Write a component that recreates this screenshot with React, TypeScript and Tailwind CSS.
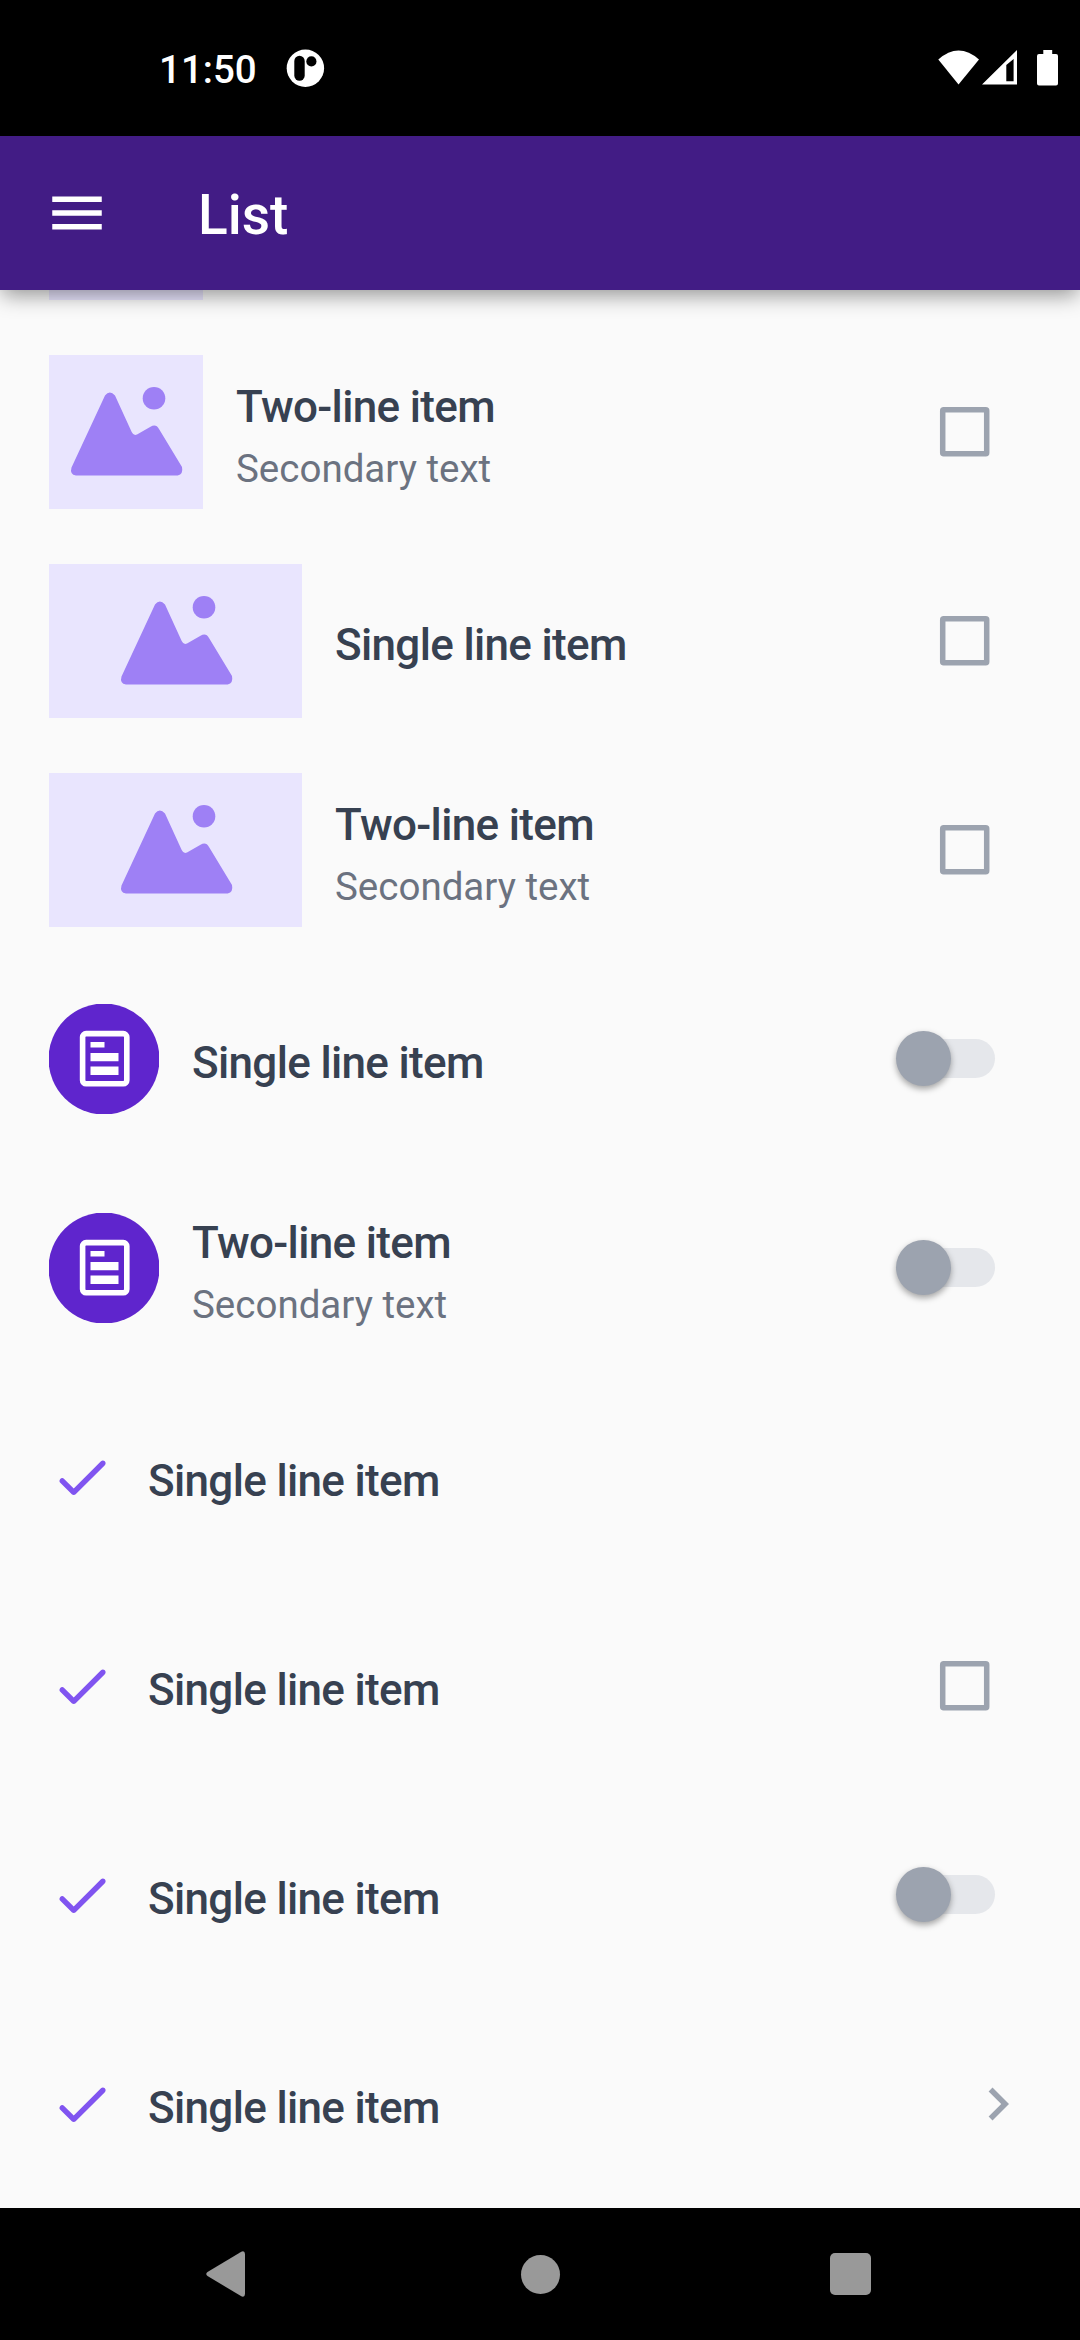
import { MdChevronRight, MdMenu } from "react-icons/md";

type Leading = "square" | "wide" | "avatar" | "check";
type Trailing = "checkbox" | "switch" | "chevron" | "none";

interface Item {
  leading: Leading;
  trailing: Trailing;
  twoLine?: boolean;
}

const items: Item[] = [
  { leading: "square", trailing: "checkbox", twoLine: true },
  { leading: "wide", trailing: "checkbox" },
  { leading: "wide", trailing: "checkbox", twoLine: true },
  { leading: "avatar", trailing: "switch" },
  { leading: "avatar", trailing: "switch", twoLine: true },
  { leading: "check", trailing: "none" },
  { leading: "check", trailing: "checkbox" },
  { leading: "check", trailing: "switch" },
  { leading: "check", trailing: "chevron" },
];

function Mountains() {
  return (
    <svg width="154" height="154" viewBox="0 0 154 154" fill="#9e80f5">
      <circle cx="105" cy="43.3" r="11.3" />
      <path d="M56 40.5Q60.7 34.5 66 40.5L82.7 77Q84.5 81 88 79.5L101.5 71.8Q107 68.5 110 74L133 112Q134.5 119 128.7 120.5H27Q20.5 119.5 22.5 112.5Z" />
    </svg>
  );
}

function Avatar() {
  return (
    <div className="h-[110px] w-[110px] shrink-0 overflow-hidden">
      <svg width="110" height="110" viewBox="0 0 110 110">
        <circle cx="55" cy="55" r="55.5" fill="#5f25cd" />
        <rect x="33.6" y="29.6" width="44.2" height="50.2" rx="3.5" fill="none" stroke="#fff" strokeWidth="5.6" />
        <path fill="#fff" d="M41.5 38h14v5.5h-14zM41.5 49h28v8.3h-28zM41.5 62.6h28v8.4h-28z" />
      </svg>
    </div>
  );
}

function LeadingView({ kind }: { kind: Leading }) {
  if (kind === "avatar") return <Avatar />;
  if (kind === "check")
    return (
      <svg className="shrink-0" width="66" height="66" viewBox="0 0 24 24" fill="#8054f0">
        <path d="M9 16.2l-3.5-3.5c-.39-.39-1.01-.39-1.4 0-.39.39-.39 1.01 0 1.4l4.19 4.19c.39.39 1.02.39 1.41 0L20.3 7.7c.39-.39.39-1.01 0-1.4-.39-.39-1.01-.39-1.4 0L9 16.2z" />
      </svg>
    );
  return (
    <div
      className={
        kind === "wide"
          ? "flex h-[154px] w-[253px] shrink-0 justify-center bg-[#e9e5fe]"
          : "flex h-[154px] w-[154px] shrink-0 justify-center bg-[#e9e5fe]"
      }
    >
      <Mountains />
    </div>
  );
}

function TrailingView({ kind }: { kind: Trailing }) {
  if (kind === "checkbox")
    return (
      <div className="mr-[33px] text-[#9ca3af]">
        <svg width="66" height="66" viewBox="0 0 66 66" fill="none" stroke="currentColor" strokeWidth="5.5">
          <rect x="10.7" y="10.7" width="44" height="44" rx="1" strokeLinejoin="round" />
        </svg>
      </div>
    );
  if (kind === "switch")
    return (
      <div className="mr-9 flex h-[39px] w-[91px] items-center rounded-full bg-[#e5e7eb]">
        <div className="-ml-2 h-[55px] w-[55px] shrink-0 rounded-full bg-[#9ca3af] shadow-[0_3px_6px_rgba(0,0,0,0.35)]" />
      </div>
    );
  if (kind === "chevron") return <MdChevronRight size={66} color="#9ca3af" />;
  return null;
}

function Row({ item }: { item: Item }) {
  return (
    <li className="flex h-[209px] shrink-0 items-center pr-[49px] pl-[49px]">
      <LeadingView kind={item.leading} />
      <div className="ml-[33px] flex flex-1 flex-col gap-[13px] pt-[9px]">
        <span className="text-[44px] leading-[52px] font-medium tracking-[-0.66px] text-[#374151]">
          {item.twoLine ? "Two-line item" : "Single line item"}
        </span>
        {item.twoLine && <span className="text-[38.5px] leading-[45px] text-[#6b7280]">Secondary text</span>}
      </div>
      <TrailingView kind={item.trailing} />
    </li>
  );
}

function StatusBar() {
  return (
    <div className="flex h-[136px] shrink-0 items-center bg-black pl-[159px] text-white">
      <span className="w-[127px] pt-[2px] text-[38.5px] leading-[45px] font-medium">11:50</span>
      <svg width="39" height="38" viewBox="0 0 39 38">
        <circle cx="19.4" cy="19.2" r="18.7" fill="#fff" />
        <rect x="8.3" y="6.8" width="10.4" height="25" rx="5.2" fill="#000" />
        <circle cx="25.4" cy="12.4" r="5.1" fill="#000" />
      </svg>
      <svg className="ml-auto" width="144" height="38" viewBox="936 49 144 38" fill="#fff">
        <path d="M938.3 59.5Q958.5 41.5 979 59.5L958.5 84.5Z" />
        <path fillRule="evenodd" d="M982 84.5L1017 50V84.5ZM1006.3 65V81.3H1013.6V59Z" />
        <path d="M1043.3 50h8.9v4h3.8q2 0 2 2v27.5q0 2-2 2h-17q-2 0-2-2V56q0-2 2-2h4.3z" />
      </svg>
    </div>
  );
}

function NavBar() {
  return (
    <div className="grid h-[132px] shrink-0 grid-cols-[206px_315px_309px_1fr] items-center bg-black">
      <span />
      <svg width="40" height="46" viewBox="0 0 40 46" fill="#999">
        <path d="M34.5 1.2Q38.7-1.2 39 3V43Q38.7 47.2 34.5 44.8L1.5 25Q-1 23 1.5 21Z" />
      </svg>
      <div className="h-[39px] w-[39px] rounded-full bg-[#999]" />
      <div className="h-[42px] w-[41px] rounded-[5px] bg-[#999]" />
    </div>
  );
}

export default function App() {
  return (
    <div className="flex h-[2340px] w-[1080px] flex-col overflow-hidden bg-[#fafafa] font-['Roboto',sans-serif]">
      <StatusBar />
      <header className="relative z-10 flex h-[154px] shrink-0 items-center bg-[#421c85] pl-11 text-white shadow-[0_7px_20px_-2px_rgba(0,0,0,0.42)]">
        <MdMenu size={66} className="mb-px" />
        <h1 className="ml-[88px] pt-1 text-[55px] leading-[64px] font-medium">List</h1>
      </header>
      <ul className="flex min-h-0 flex-1 flex-col overflow-hidden">
        {/* Bottom edge of the thumbnail scrolled under the app bar */}
        <li className="h-[37px] shrink-0 pl-[49px]">
          <div className="h-[10px] w-[154px] bg-[#e9e5fe]" />
        </li>
        {items.map((item, i) => (
          <Row key={i} item={item} />
        ))}
      </ul>
      <NavBar />
    </div>
  );
}
